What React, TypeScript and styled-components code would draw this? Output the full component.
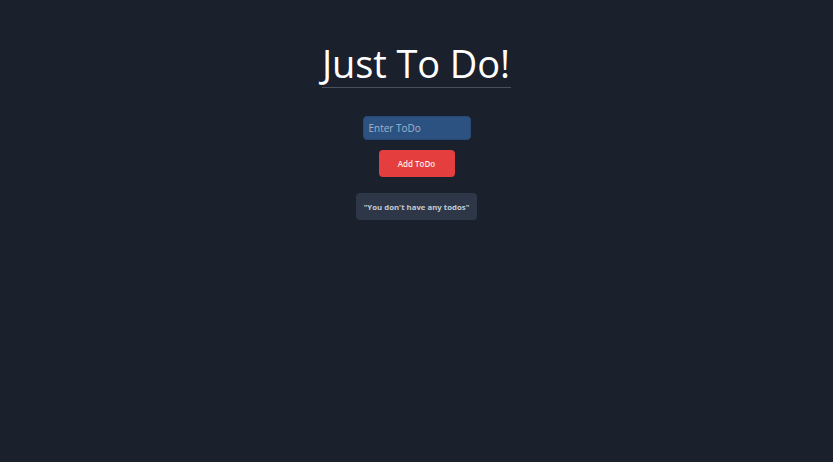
import React from "react";
import styled, { createGlobalStyle } from "styled-components";

const Global = createGlobalStyle`
  html, body { margin: 0; padding: 0; background: #1a202c; }
  body { font-family: "Open Sans", "Noto Sans", sans-serif; min-height: 462px; }
`;

const Page = styled.main`
  display: flex;
  flex-direction: column;
  align-items: center;
  padding-top: 39px;
`;

const Title = styled.h1`
  margin: 0;
  font-weight: 400;
  font-size: 38px;
  line-height: 48px;
  color: #ffffff;
  padding: 0 1px 0 0;
  border-bottom: 1px solid #4a5060;
  letter-spacing: -0.1px;
`;

const Form = styled.form`
  display: flex;
  flex-direction: column;
  align-items: center;
  gap: 10px;
  margin-top: 28px;
`;

const Input = styled.input`
  box-sizing: border-box;
  width: 108px;
  height: 24px;
  background: #2c5282;
  border: 1px solid #2a4a75;
  border-radius: 4px;
  padding: 0 5px;
  font-family: inherit;
  font-size: 10px;
  color: #e2e8f0;
  outline: none;
  &::placeholder { color: #a0b4cc; }
`;

const Button = styled.button`
  box-sizing: border-box;
  width: 76px;
  height: 27px;
  background: #e53e3e;
  border: none;
  border-radius: 4px;
  color: #fde8e8;
  font-family: inherit;
  font-weight: 600;
  font-size: 8px;
`;

const Empty = styled.div`
  margin-top: 16px;
  box-sizing: border-box;
  width: 121px;
  height: 27px;
  display: flex;
  align-items: center;
  justify-content: center;
  background: #2d3748;
  border-radius: 4px;
  color: #c4cad4;
  font-weight: 700;
  font-size: 7.8px;
`;

export default function App() {
  return (
    <>
      <Global />
      <Page>
        <Title>Just To Do!</Title>
        <Form onSubmit={(e) => e.preventDefault()}>
          <Input placeholder="Enter ToDo" />
          <Button type="submit">Add ToDo</Button>
        </Form>
        <Empty>"You don't have any todos"</Empty>
      </Page>
    </>
  );
}
